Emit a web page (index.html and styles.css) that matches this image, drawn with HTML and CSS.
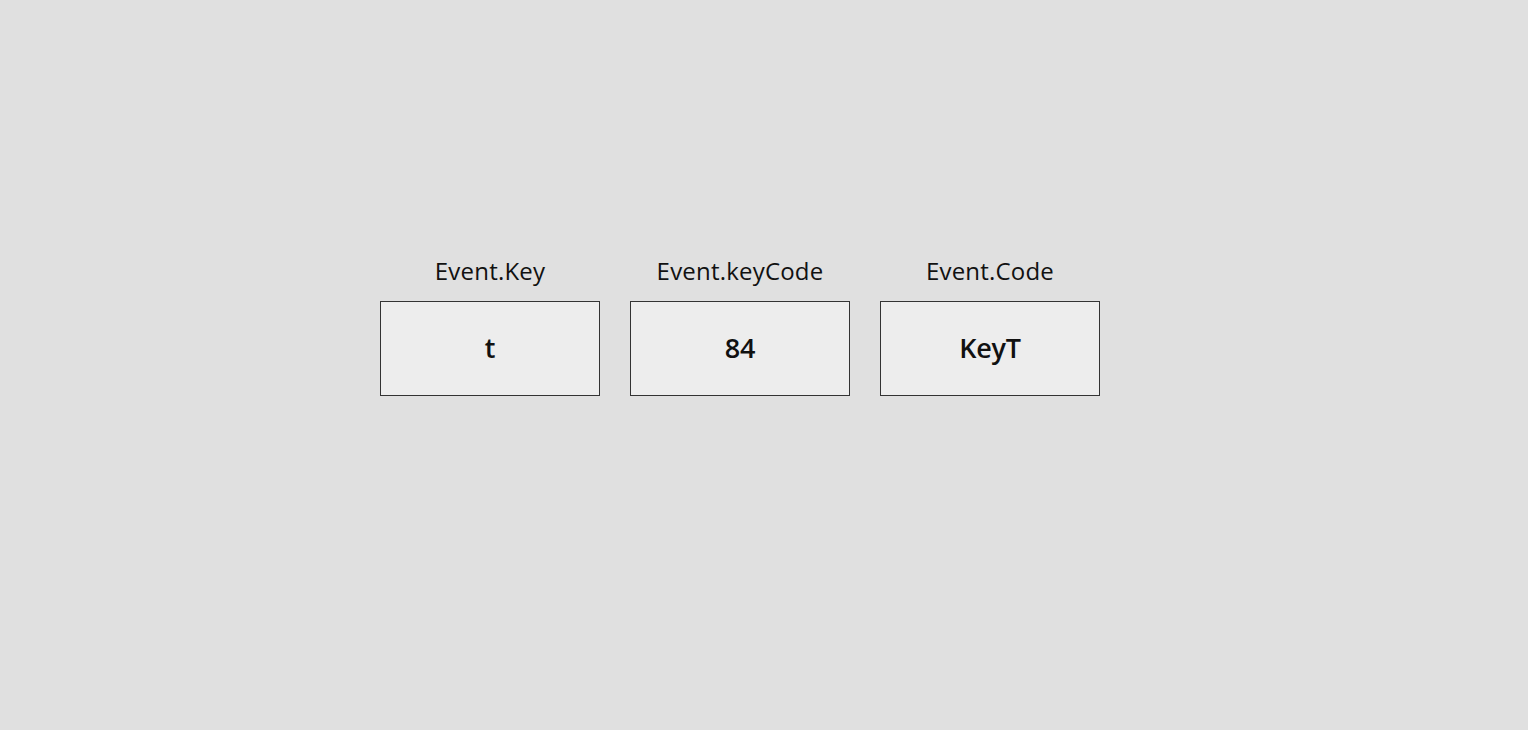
FILE: index.html
```html
<!DOCTYPE html>
<html>
<head>
<meta charset="utf-8">
<link rel="stylesheet" href="styles.css">
</head>
<body>
<main class="page">
  <div class="keys">
    <div class="col">
      <div class="label">Event.Key</div>
      <div class="box">t</div>
    </div>
    <div class="col">
      <div class="label">Event.keyCode</div>
      <div class="box">84</div>
    </div>
    <div class="col">
      <div class="label">Event.Code</div>
      <div class="box">KeyT</div>
    </div>
  </div>
</main>
</body>
</html>
```

FILE: styles.css
```css
html, body {
  margin: 0;
  padding: 0;
  background: #e0e0e0;
  height: 100%;
}
.page {
  box-sizing: border-box;
  height: 730px;
  padding-top: 255px;
  padding-left: 380px;
  font-family: "Open Sans", "Noto Sans", sans-serif;
  color: #111;
}
.keys {
  display: flex;
  gap: 30px;
}
.col {
  width: 220px;
  display: flex;
  flex-direction: column;
  align-items: center;
}
.label {
  font-size: 24px;
  line-height: 32px;
  margin-bottom: 14px;
  letter-spacing: 0.2px;
}
.box {
  box-sizing: border-box;
  width: 220px;
  height: 95px;
  padding-bottom: 3px;
  border: 1px solid #333;
  background: #ededed;
  display: flex;
  align-items: center;
  justify-content: center;
  font-size: 27px;
  font-weight: 600;
  letter-spacing: -0.3px;
}
```
